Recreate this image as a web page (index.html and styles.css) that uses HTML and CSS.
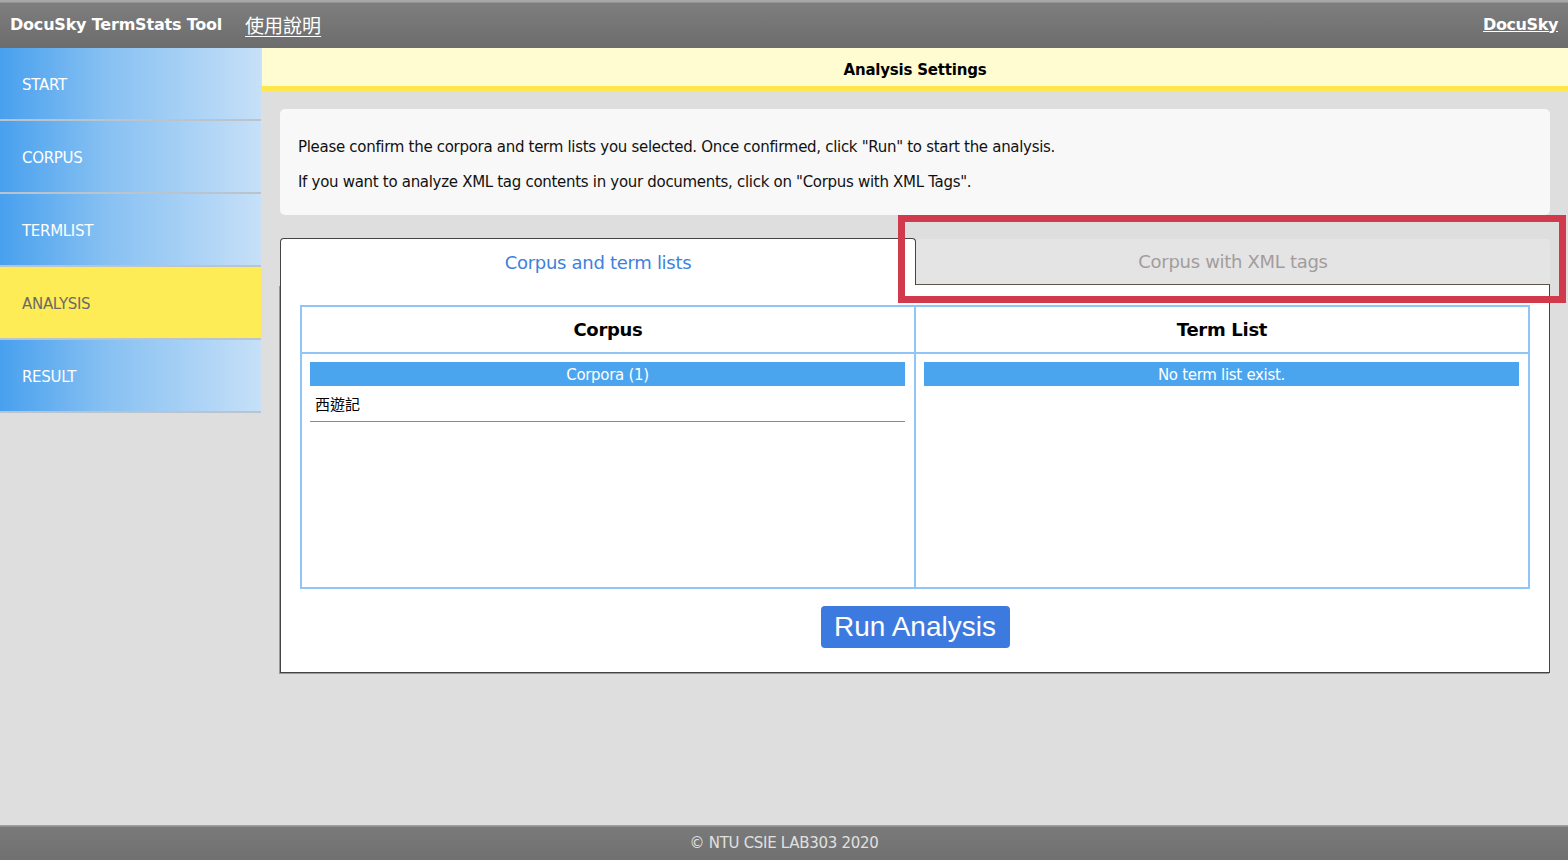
FILE: index.html
```html
<!DOCTYPE html>
<html lang="en">
<head>
<meta charset="utf-8">
<title>DocuSky TermStats Tool</title>
<link rel="stylesheet" href="styles.css">
</head>
<body>
<div class="page">
  <header class="topbar">
    <div class="brand">
      <span class="title">DocuSky TermStats Tool</span>
      <a class="manual" href="#">使用說明</a>
    </div>
    <a class="docusky" href="#">DocuSky</a>
  </header>
  <div class="middle">
    <nav class="sidebar">
      <div class="nav-item">START</div>
      <div class="nav-item">CORPUS</div>
      <div class="nav-item">TERMLIST</div>
      <div class="nav-item active">ANALYSIS</div>
      <div class="nav-item">RESULT</div>
    </nav>
    <main class="main">
      <div class="section-title">Analysis Settings</div>
      <div class="content">
        <div class="info">
          <p>Please confirm the corpora and term lists you selected. Once confirmed, click "Run" to start the analysis.</p>
          <p>If you want to analyze XML tag contents in your documents, click on "Corpus with XML Tags".</p>
        </div>
        <div class="tabs-wrap">
          <div class="tabs">
            <div class="tab active">Corpus and term lists</div>
            <div class="tab inactive">Corpus with XML tags</div>
          </div>
          <div class="highlight"></div>
          <div class="panel">
            <div class="grid">
              <div class="col">
                <div class="col-head">Corpus</div>
                <div class="col-body">
                  <div class="bar">Corpora (1)</div>
                  <div class="entry">西遊記</div>
                </div>
              </div>
              <div class="col">
                <div class="col-head">Term List</div>
                <div class="col-body">
                  <div class="bar">No term list exist.</div>
                </div>
              </div>
            </div>
            <div class="actions">
              <button class="run">Run Analysis</button>
            </div>
          </div>
        </div>
      </div>
    </main>
  </div>
  <footer class="footer">© NTU CSIE LAB303 2020</footer>
</div>
</body>
</html>
```
FILE: styles.css
```css
* { box-sizing: border-box; }
html, body { margin: 0; padding: 0; }
body {
  font-family: "DejaVu Sans", Verdana, sans-serif;
  background: #dedede;
  width: 1568px;
  height: 860px;
  overflow: hidden;
}
.page {
  display: flex;
  flex-direction: column;
  height: 860px;
}
.topbar {
  height: 48px;
  flex: none;
  display: flex;
  align-items: center;
  justify-content: space-between;
  padding: 0 10px 0 10px;
  background: linear-gradient(#a8a8a8 0, #a8a8a8 2px, #7e7e7e 3px, #6c6c6c 100%);
  color: #fff;
}
.brand { display: flex; align-items: center; }
.title {
  font-weight: bold;
  font-size: 16px;
  letter-spacing: -0.2px;
}
.manual {
  margin-left: 23px;
  color: #fff;
  font-size: 19px;
  font-family: "Noto Sans CJK TC", sans-serif;
  text-decoration: underline;
  text-underline-offset: 3px;
}
.docusky {
  color: #fff;
  font-weight: bold;
  font-size: 16px;
  text-decoration: underline;
  letter-spacing: -0.4px;
}
.middle {
  flex: 1;
  display: flex;
  min-height: 0;
}
.sidebar {
  width: 262px;
  flex: none;
  display: flex;
  flex-direction: column;
}
.nav-item {
  height: 73px;
  display: flex;
  align-items: center;
  padding: 2px 0 0 22px;
  color: #fff;
  font-size: 15px;
  letter-spacing: -0.3px;
  background: linear-gradient(90deg, #48a0ee 0%, #86c0f2 40%, #c6e0f8 100%);
  border-bottom: 2px solid #b9c4cf;
  margin-right: 1px;
}
.nav-item.active {
  background: #fdec55;
  color: #6a6a6a;
}
.main {
  flex: 1;
  display: flex;
  flex-direction: column;
}
.section-title {
  height: 43px;
  background: #fffcd2;
  border-bottom: 5px solid #fde74c;
  display: flex;
  align-items: center;
  justify-content: center;
  font-weight: bold;
  font-size: 15px;
  letter-spacing: -0.2px;
  color: #000;
  padding-top: 5px;
}
.content {
  padding: 18px 18px 0 18px;
}
.info {
  background: #f8f8f8;
  border-radius: 5px;
  height: 106px;
  padding: 29px 18px 0 18px;
  font-size: 15px;
  letter-spacing: -0.3px;
  color: #111;
}
.info p { margin: 0 0 17px 0; line-height: 18px; }
.tabs-wrap {
  position: relative;
  margin-top: 23px;
}
.tabs {
  display: flex;
  height: 47px;
}
.tab {
  flex: 1;
  display: flex;
  align-items: center;
  justify-content: center;
  font-size: 18px;
  letter-spacing: -0.3px;
}
.tab.active {
  background: #fff;
  color: #3e7fe0;
  border: 1px solid #444;
  border-bottom: none;
  border-radius: 4px 4px 0 0;
}
.tab.inactive {
  background: #e4e4e4;
  color: #a39c9c;
  border-bottom: 1px solid #5a554f;
  border-radius: 4px 4px 0 0;
  margin-top: 1px;
}
.highlight {
  position: absolute;
  left: 618px;
  top: -23px;
  width: 668px;
  height: 88px;
  border: 7px solid #d13a4c;
  pointer-events: none;
}
.panel {
  background: #fff;
  border: 1px solid #444;
  border-top: none;
  box-shadow: -1px 1px 0 #999;
  padding: 19px 19px 24px 19px;
}
.grid {
  display: flex;
  border: 2px solid #8fc6f7;
  height: 284px;
  margin-top: 1px;
}
.col { flex: 1; display: flex; flex-direction: column; }
.col + .col { border-left: 2px solid #8fc6f7; }
.col-head {
  height: 47px;
  display: flex;
  align-items: center;
  justify-content: center;
  font-weight: bold;
  font-size: 18px;
  letter-spacing: -0.3px;
  border-bottom: 2px solid #8fc6f7;
}
.col-body {
  padding: 8px 9px 0 8px;
}
.bar {
  background: #4ba5ee;
  color: #fff;
  height: 24px;
  display: flex;
  align-items: center;
  justify-content: center;
  font-size: 15px;
  letter-spacing: -0.3px;
  padding-top: 1px;
}
.entry {
  height: 36px;
  display: flex;
  align-items: center;
  padding-left: 5px;
  font-family: "Noto Sans CJK TC", sans-serif;
  font-size: 15px;
  border-bottom: 1px solid #8a8a8a;
}
.actions {
  display: flex;
  justify-content: center;
  padding-top: 17px;
}
.run {
  background: #3d7ae0;
  color: #fff;
  border: none;
  border-radius: 4px;
  height: 42px;
  width: 189px;
  font-family: "Liberation Sans", Arial, sans-serif;
  font-size: 28px;
  padding: 0;
}
.footer {
  height: 35px;
  flex: none;
  background: linear-gradient(#a0a0a0 0, #a0a0a0 1px, #7a7a7a 2px, #707070 100%);
  color: #e0e0e0;
  font-size: 15px;
  letter-spacing: -0.3px;
  display: flex;
  align-items: center;
  justify-content: center;
}
```
